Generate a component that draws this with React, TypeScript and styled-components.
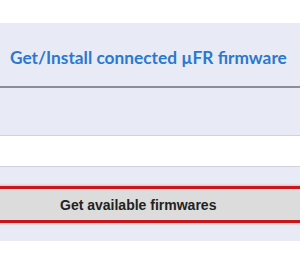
import styled, { createGlobalStyle } from "styled-components";

const GlobalStyle = createGlobalStyle`
  body {
    margin: 0;
    background: #ffffff;
  }
`;

export default function App() {
  return (
    <>
      <GlobalStyle />
      <Page>
        <Header>
          <Title>Get/Install connected µFR firmware</Title>
        </Header>
        <Section />
        <WhiteRow />
        <ButtonBand>
          <ActionButton>Get available firmwares</ActionButton>
        </ButtonBand>
      </Page>
    </>
  );
}

const Page = styled.div`
  padding-top: 23px;
`;

const Header = styled.div`
  height: 65px;
  box-sizing: border-box;
  padding: 20px 0 0 10px;
  background: #e8ebf5;
  border-bottom: 2px solid #8b8e98;
`;

const Title = styled.h1`
  margin: 0;
  font-family: Lato, "Liberation Sans", sans-serif;
  font-weight: 700;
  font-size: 17.3px;
  line-height: 30px;
  color: #2b78d0;
  white-space: nowrap;
`;

const Section = styled.div`
  height: 47px;
  background: #e8ebf5;
  border-bottom: 1px solid #d0d3db;
`;

const WhiteRow = styled.div`
  height: 30px;
  background: #ffffff;
  border-bottom: 1px solid #d0d3db;
`;

const ButtonBand = styled.div`
  padding: 19px 0 18px;
  background: #e8ebf5;
`;

const ActionButton = styled.button`
  display: block;
  width: 100%;
  height: 37px;
  margin: 0;
  padding: 0 0 0 60px;
  text-align: left;
  background: #dcdcdc;
  border: none;
  border-top: 3px solid #c8161d;
  border-bottom: 3px solid #c8161d;
  box-shadow: 0 0 2px 1px rgba(240, 140, 150, 0.6);
  font-family: "Liberation Sans", Arial, sans-serif;
  font-weight: 700;
  font-size: 14px;
  color: #222222;
  cursor: pointer;
`;
